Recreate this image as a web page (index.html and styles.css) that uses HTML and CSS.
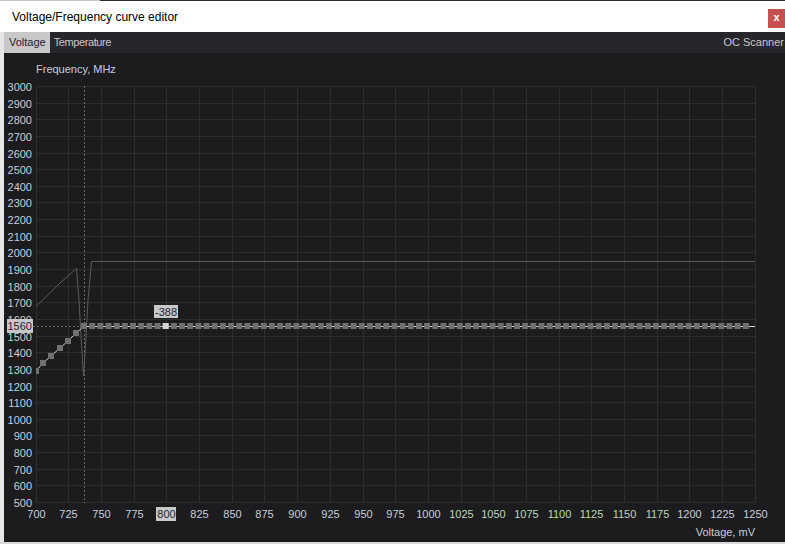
FILE: index.html
```html
<!DOCTYPE html>
<html>
<head>
<meta charset="utf-8">
<title>Voltage/Frequency curve editor</title>
<link rel="stylesheet" href="styles.css">
</head>
<body>
<div class="window">
  <div class="topedge"></div>
  <header class="titlebar">
    <span class="title">Voltage/Frequency curve editor</span>
    <span class="close">x</span>
  </header>
  <div class="frame">
    <div class="leftedge"></div>
    <div class="content">
      <nav class="tabs">
        <span class="tab active">Voltage</span>
        <span class="tab temp">Temperature</span>
        <span class="tab scanner">OC Scanner</span>
      </nav>
      <svg class="chart" width="781" height="489" viewBox="4 53 781 489" xmlns="http://www.w3.org/2000/svg">
        <g class="grid">
          <line x1="36.5" y1="86" x2="36.5" y2="503"/><line x1="68.5" y1="86" x2="68.5" y2="503"/>
          <line x1="101.5" y1="86" x2="101.5" y2="503"/><line x1="134.5" y1="86" x2="134.5" y2="503"/>
          <line x1="166.5" y1="86" x2="166.5" y2="503"/><line x1="199.5" y1="86" x2="199.5" y2="503"/>
          <line x1="232.5" y1="86" x2="232.5" y2="503"/><line x1="264.5" y1="86" x2="264.5" y2="503"/>
          <line x1="297.5" y1="86" x2="297.5" y2="503"/><line x1="330.5" y1="86" x2="330.5" y2="503"/>
          <line x1="363.5" y1="86" x2="363.5" y2="503"/><line x1="395.5" y1="86" x2="395.5" y2="503"/>
          <line x1="428.5" y1="86" x2="428.5" y2="503"/><line x1="461.5" y1="86" x2="461.5" y2="503"/>
          <line x1="493.5" y1="86" x2="493.5" y2="503"/><line x1="526.5" y1="86" x2="526.5" y2="503"/>
          <line x1="559.5" y1="86" x2="559.5" y2="503"/><line x1="591.5" y1="86" x2="591.5" y2="503"/>
          <line x1="624.5" y1="86" x2="624.5" y2="503"/><line x1="657.5" y1="86" x2="657.5" y2="503"/>
          <line x1="689.5" y1="86" x2="689.5" y2="503"/><line x1="722.5" y1="86" x2="722.5" y2="503"/>
          <line x1="755.5" y1="86" x2="755.5" y2="503"/>
          <line x1="36" y1="86.5" x2="756" y2="86.5"/><line x1="36" y1="103.5" x2="756" y2="103.5"/>
          <line x1="36" y1="119.5" x2="756" y2="119.5"/><line x1="36" y1="136.5" x2="756" y2="136.5"/>
          <line x1="36" y1="153.5" x2="756" y2="153.5"/><line x1="36" y1="169.5" x2="756" y2="169.5"/>
          <line x1="36" y1="186.5" x2="756" y2="186.5"/><line x1="36" y1="202.5" x2="756" y2="202.5"/>
          <line x1="36" y1="219.5" x2="756" y2="219.5"/><line x1="36" y1="236.5" x2="756" y2="236.5"/>
          <line x1="36" y1="252.5" x2="756" y2="252.5"/><line x1="36" y1="269.5" x2="756" y2="269.5"/>
          <line x1="36" y1="286.5" x2="756" y2="286.5"/><line x1="36" y1="302.5" x2="756" y2="302.5"/>
          <line x1="36" y1="319.5" x2="756" y2="319.5"/><line x1="36" y1="336.5" x2="756" y2="336.5"/>
          <line x1="36" y1="352.5" x2="756" y2="352.5"/><line x1="36" y1="369.5" x2="756" y2="369.5"/>
          <line x1="36" y1="386.5" x2="756" y2="386.5"/><line x1="36" y1="402.5" x2="756" y2="402.5"/>
          <line x1="36" y1="419.5" x2="756" y2="419.5"/><line x1="36" y1="435.5" x2="756" y2="435.5"/>
          <line x1="36" y1="452.5" x2="756" y2="452.5"/><line x1="36" y1="469.5" x2="756" y2="469.5"/>
          <line x1="36" y1="485.5" x2="756" y2="485.5"/><line x1="36" y1="502.5" x2="756" y2="502.5"/>
        </g>

        <text class="axis-title" x="36" y="72.5">Frequency, MHz</text>

        <g class="ylabels">
          <text x="32" y="90.5">3000</text><text x="32" y="107.5">2900</text>
          <text x="32" y="123.5">2800</text><text x="32" y="140.5">2700</text>
          <text x="32" y="157.5">2600</text><text x="32" y="173.5">2500</text>
          <text x="32" y="190.5">2400</text><text x="32" y="206.5">2300</text>
          <text x="32" y="223.5">2200</text><text x="32" y="240.5">2100</text>
          <text x="32" y="256.5">2000</text><text x="32" y="273.5">1900</text>
          <text x="32" y="290.5">1800</text><text x="32" y="306.5">1700</text>
          <text x="32" y="323.5">1600</text><text x="32" y="340.5">1500</text>
          <text x="32" y="356.5">1400</text><text x="32" y="373.5">1300</text>
          <text x="32" y="390.5">1200</text><text x="32" y="406.5">1100</text>
          <text x="32" y="423.5">1000</text><text x="32" y="439.5">900</text>
          <text x="32" y="456.5">800</text><text x="32" y="473.5">700</text>
          <text x="32" y="489.5">600</text><text x="32" y="506.5">500</text>
        </g>

        <g class="xlabels">
          <text x="36.5" y="518">700</text><text x="68.5" y="518">725</text>
          <text x="101.5" y="518">750</text><text x="134.5" y="518">775</text>
          <rect class="hl-box" x="156" y="507" width="20" height="14"/>
          <text class="hl-text" x="166.5" y="518">800</text>
          <text x="199.5" y="518">825</text>
          <text x="232.5" y="518">850</text><text x="264.5" y="518">875</text>
          <text x="297.5" y="518">900</text><text x="330.5" y="518">925</text>
          <text x="363.5" y="518">950</text><text x="395.5" y="518">975</text>
          <text x="428.5" y="518">1000</text>
          <text class="green" x="461.5" y="518">1025</text>
          <text class="green" x="493.5" y="518">1050</text><text class="green" x="526.5" y="518">1075</text>
          <text class="green" x="559.5" y="518">1100</text><text class="green" x="591.5" y="518">1125</text>
          <text class="green" x="624.5" y="518">1150</text><text class="green" x="657.5" y="518">1175</text>
          <text x="689.5" y="518">1200</text><text x="722.5" y="518">1225</text>
          <text x="755.5" y="518">1250</text>
        </g>
        <text class="axis-title end" x="755" y="536">Voltage, mV</text>

        <line class="dash" x1="84.5" y1="86" x2="84.5" y2="503"/>
        <line class="dash" x1="33" y1="326.5" x2="81" y2="326.5"/>

        <polyline class="ref-curve" points="36,306.5 60,283 76.5,268.5 79,300 81.5,345 83.5,376 85.5,345 88,300 91.5,261.5 755,261.5"/>

        <polyline class="vf-line" points="36,371 43,363 51,356 60,348 68,341 76,333 84,326.5 755,326.5"/>
        <g class="pts">
          <rect x="36" y="368" width="3" height="6"/>
          <rect x="40" y="360" width="6" height="6"/>
          <rect x="48" y="353" width="6" height="6"/>
          <rect x="57" y="345" width="6" height="6"/>
          <rect x="65" y="338" width="6" height="6"/>
          <rect x="73" y="330" width="6" height="6"/>
        </g>
        <line class="flat-pts" x1="81" y1="326" x2="748.8" y2="326"/>
        <rect class="pt-sel" x="162.7" y="323" width="6" height="6"/>

        <rect class="hl-box" x="154" y="305" width="24" height="13"/>
        <text class="hl-text" x="166" y="316">-388</text>

        <rect class="hl-box" x="7" y="319" width="26" height="14"/>
        <text class="hl-text start" x="7.5" y="330">1560</text>
      </svg>
    </div>
  </div>
  <div class="bottomedge"></div>
</div>
</body>
</html>
```
FILE: styles.css
```css
html, body {
  margin: 0;
  padding: 0;
  background: #e8e8e8;
  overflow: hidden;
}
.window {
  width: 785px;
  height: 544px;
  display: flex;
  flex-direction: column;
  font-family: "Liberation Sans", Arial, sans-serif;
}
.topedge {
  height: 1px;
  background: linear-gradient(to right, #c4c4c4 0, #c4c4c4 100px, #2e2e2e 100px, #2e2e2e 100%);
}
.titlebar {
  height: 31px;
  background: #ffffff;
  display: flex;
  align-items: center;
  justify-content: space-between;
}
.title {
  padding-left: 12px;
  font-size: 12px;
  color: #000;
}
.close {
  align-self: flex-start;
  margin-top: 8px;
  width: 17px;
  height: 19px;
  background: #c75050;
  color: #fff;
  font-weight: bold;
  font-size: 11px;
  line-height: 17px;
  text-align: center;
}
.frame {
  display: flex;
  height: 510px;
}
.leftedge {
  width: 4px;
  background: #e6e6e6;
}
.content {
  flex: 1;
  display: flex;
  flex-direction: column;
  background: #1c1c1e;
}
.tabs {
  height: 21px;
  display: flex;
  background: #26262b;
  font-size: 11px;
  line-height: 21px;
}
.tab {
  color: #c8c8cc;
  padding: 0 4px 0 4px;
}
.tab.active {
  background: #c8c8c8;
  color: #1c2330;
  padding: 0 4px 0 5px;
}
.tab.temp {
  letter-spacing: -0.4px;
}
.tab.scanner {
  margin-left: auto;
  padding: 0 1px 0 0;
}
.chart {
  display: block;
  width: 781px;
  height: 489px;
}
.grid line {
  stroke: #2e2e32;
  stroke-width: 1;
}
.ylabels text {
  font-family: "Liberation Sans", Arial, sans-serif;
  font-size: 11px;
  fill: #c6cedb;
  text-anchor: end;
}
.xlabels text {
  font-family: "Liberation Sans", Arial, sans-serif;
  font-size: 11px;
  fill: #c6cedb;
  text-anchor: middle;
}
.xlabels text.green {
  fill: #bcd6bc;
}
.axis-title {
  font-family: "Liberation Sans", Arial, sans-serif;
  font-size: 11px;
  fill: #c6cedb;
}
.axis-title.end {
  text-anchor: end;
}
.hl-box {
  fill: #c8c8c8;
}
.chart text.hl-text {
  font-family: "Liberation Sans", Arial, sans-serif;
  font-size: 11px;
  fill: #1c2636;
  text-anchor: middle;
}
.chart text.hl-text.start {
  text-anchor: start;
}
.dash {
  stroke: #6a6a6a;
  stroke-width: 1;
  stroke-dasharray: 2 2;
}
.ref-curve {
  fill: none;
  stroke: #5a5a5c;
  stroke-width: 1;
}
.vf-line {
  fill: none;
  stroke: #d6d6d6;
  stroke-width: 1;
}
.pts rect {
  fill: #707070;
}
.flat-pts {
  stroke: #707070;
  stroke-width: 6;
  stroke-dasharray: 6 2.17;
}
.pt-sel {
  fill: #d4d4d4;
}
.bottomedge {
  height: 2px;
  background: #d8d8d8;
}
```
